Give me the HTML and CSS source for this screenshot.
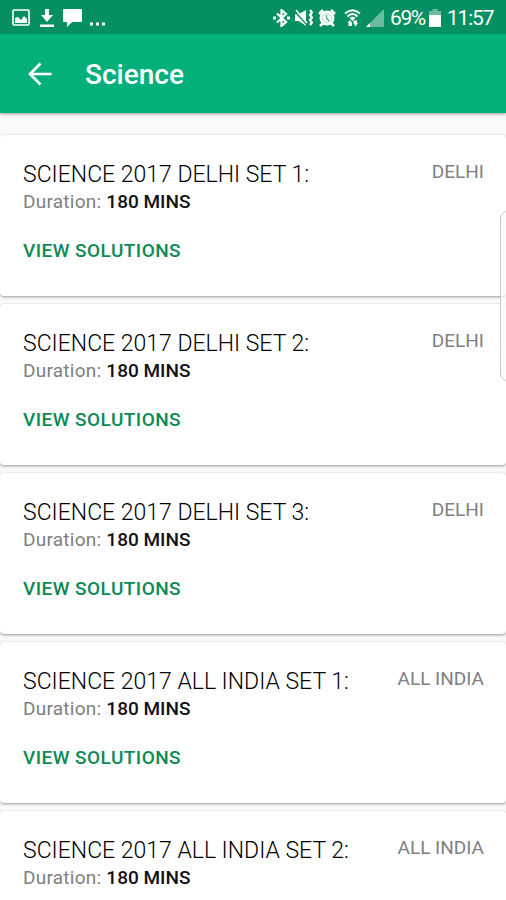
FILE: index.html
```html
<!DOCTYPE html>
<html lang="en">
<head>
    <meta charset="UTF-8">
    <title>Science</title>
    <link rel="stylesheet" href="styles.css">
</head>
<body>
    <header class="header">
        <div class="status-bar">
            <div class="status-left">
                <svg class="icon-picture" width="18" height="17" viewBox="0 0 18 17">
                    <rect x="1" y="1" width="16" height="15" rx="1" fill="none" stroke="#fff" stroke-width="1.6"/>
                    <path d="M3 14V9l3-1 3 3 3-4 3 3v4z" fill="#fff"/>
                </svg>
                <svg class="icon-download" width="14" height="18" viewBox="0 0 14 18">
                    <path d="M5 0h4v6h4l-6 7-6-7h4zM0 15.5h14V18H0z" fill="#fff"/>
                </svg>
                <svg class="icon-chat" width="19" height="18" viewBox="0 0 19 18">
                    <path d="M1 0h17q1 0 1 1v11q0 1-1 1h-9l-5 5v-5H1q-1 0-1-1V1q0-1 1-1z" fill="#fff"/>
                </svg>
                <svg class="icon-more" width="16" height="4" viewBox="0 0 16 4">
                    <path d="M0 .5h3v3H0zM6 .5h3v3H6zM12 .5h3v3h-3z" fill="#fff"/>
                </svg>
            </div>
            <div class="status-right">
                <svg class="icon-bluetooth" width="17" height="18" viewBox="0 0 17 18">
                    <path d="M4 4.5l9 8.5-4.5 4V1L13 5l-9 8.5" fill="none" stroke="#fff" stroke-width="2.2"/>
                    <path d="M0 7.500h3v3H0zM14 7.500h3v3h-3z" fill="#fff"/>
                </svg>
                <svg class="icon-mute" width="18" height="18" viewBox="0 0 18 18">
                    <path d="M0 5h4l7-4v16l-7-5H0z" fill="#fff"/>
                    <path d="M0 2.500L12 16" stroke="#058f62" stroke-width="1.5"/>
                    <path d="M1 1l11 13" stroke="#fff" stroke-width="1.5"/>
                    <path d="M15 1l2 2.500-2 2.500 2 2.500-2 2.500 2 2.500-2 2.500" fill="none" stroke="#fff" stroke-width="2.2"/>
                </svg>
                <svg class="icon-alarm" width="18" height="18" viewBox="0 0 18 18">
                    <circle cx="9" cy="9" r="7.500" fill="#fff"/>
                    <path d="M1 5l4-4M13 1l4 4M2 17l3-3M16 17l-3-3" stroke="#fff" stroke-width="2.500"/>
                    <circle cx="9" cy="9" r="4.500" fill="none" stroke="#b5ddcf" stroke-width="1"/>
                    <path d="M8.500 6v3l2.500 3" fill="none" stroke="#45ad8b" stroke-width="1.300"/>
                </svg>
                <svg class="icon-wifi" width="17" height="18" viewBox="0 0 17 18">
                    <path d="M1 4.500Q8.500-2 16 4.500M3.500 7.500Q8.500 2.500 13.500 7.500" fill="none" stroke="#fff" stroke-width="2"/>
                    <path d="M5.500 9q3-2.500 6 0l-3 3z" fill="#fff"/>
                    <path d="M3.500 14l2.500-3 2 3v3H4.500v-3zM9.500 11.500H13V14h1l-2.500 3.500L9.500 14z" fill="#fff"/>
                </svg>
                <svg class="icon-signal" width="18" height="18" viewBox="0 0 18 18">
                    <path d="M18 0v18H0z" fill="#6bbc9f"/>
                    <path d="M4 14v4H0z" fill="#fff"/>
                </svg>
                <span class="battery-text">69%</span>
                <svg class="icon-battery" width="12" height="18" viewBox="0 0 12 18">
                    <path d="M3.500 0h5v2H12v5H0V2h3.500z" fill="#6bbc9f"/>
                    <path d="M0 6h12v12H0z" fill="#fff"/>
                </svg>
                <span class="clock">11:57</span>
            </div>
        </div>
        <div class="toolbar">
            <svg class="back" width="24" height="24" viewBox="0 0 24 24">
                <path d="M12.500 1.500L2 12l10.500 10.500M2 12h21.500" fill="none" stroke="#fff" stroke-width="2.700"/>
            </svg>
            <h1 class="title">Science</h1>
        </div>
    </header>

    <main class="list">
        <div class="card">
            <div class="card-top">
                <h2 class="card-title">SCIENCE 2017 DELHI SET 1:</h2>
                <span class="region">DELHI</span>
            </div>
            <p class="duration">Duration: <b>180 MINS</b></p>
            <a class="solutions">VIEW SOLUTIONS</a>
        </div>
        <div class="card">
            <div class="card-top">
                <h2 class="card-title">SCIENCE 2017 DELHI SET 2:</h2>
                <span class="region">DELHI</span>
            </div>
            <p class="duration">Duration: <b>180 MINS</b></p>
            <a class="solutions">VIEW SOLUTIONS</a>
        </div>
        <div class="card">
            <div class="card-top">
                <h2 class="card-title">SCIENCE 2017 DELHI SET 3:</h2>
                <span class="region">DELHI</span>
            </div>
            <p class="duration">Duration: <b>180 MINS</b></p>
            <a class="solutions">VIEW SOLUTIONS</a>
        </div>
        <div class="card">
            <div class="card-top">
                <h2 class="card-title">SCIENCE 2017 ALL INDIA SET 1:</h2>
                <span class="region">ALL INDIA</span>
            </div>
            <p class="duration">Duration: <b>180 MINS</b></p>
            <a class="solutions">VIEW SOLUTIONS</a>
        </div>
        <div class="card card-last">
            <div class="card-top">
                <h2 class="card-title">SCIENCE 2017 ALL INDIA SET 2:</h2>
                <span class="region">ALL INDIA</span>
            </div>
            <p class="duration">Duration: <b>180 MINS</b></p>
        </div>
    </main>

    <div class="edge-handle"></div>
</body>
</html>
```

FILE: styles.css
```css
* {
    box-sizing: border-box;
}

body {
    margin: 0;
    height: 900px;
    overflow: hidden;
    position: relative;
    display: flex;
    flex-direction: column;
    background-color: #fafafa;
    font-family: Roboto, "Liberation Sans", sans-serif;
}

h1, h2, p {
    margin: 0;
}

svg {
    display: block;
    flex-shrink: 0;
}

.header {
    flex-shrink: 0;
    background-color: #03b07b;
    box-shadow: 0 1px 3px rgba(0, 0, 0, 0.4);
}

.status-bar {
    height: 34px;
    padding: 1px 13px 0 12px;
    display: flex;
    justify-content: space-between;
    align-items: center;
    background-color: #058f62;
    color: white;
}

.status-left,
.status-right {
    display: flex;
    align-items: center;
}

.icon-download {
    margin-left: 10px;
}

.icon-chat {
    margin-left: 9px;
}

.icon-more {
    margin: 12px 0 0 8px;
}

.icon-mute {
    margin-left: 5px;
}

.icon-alarm {
    margin-left: 5px;
}

.icon-wifi {
    margin-left: 8px;
}

.icon-signal {
    margin-left: 5px;
}

.battery-text,
.clock {
    font-size: 21px;
    line-height: 24px;
    white-space: nowrap;
}

.battery-text {
    width: 34px;
    margin: 0 5px 0 6px;
    letter-spacing: -1.4px;
}

.clock {
    width: 46px;
    margin-left: 6px;
    letter-spacing: -1.2px;
}

.toolbar {
    height: 79px;
    padding-left: 28px;
    display: flex;
    align-items: center;
}

.title {
    margin: 3px 0 0 33px;
    font-size: 28px;
    font-weight: 500;
    line-height: 32px;
    color: white;
}

.list {
    flex: 1;
    min-height: 0;
    padding-top: 22px;
    display: flex;
    flex-direction: column;
    gap: 8px;
}

.card {
    flex-shrink: 0;
    height: 161px;
    padding: 24px 22px 0 23px;
    border-radius: 4px;
    background-color: white;
    box-shadow: 0 1px 3px rgba(0, 0, 0, 0.4);
}

/* cut off by the bottom of the screen */
.card-last {
    flex: 1;
    height: auto;
    border-radius: 4px 4px 0 0;
}

.card-top {
    display: flex;
    justify-content: space-between;
}

.card-title {
    padding-top: 1px;
    font-size: 23px;
    font-weight: 300;
    line-height: 29px;
    color: #000;
}

.region {
    font-size: 19px;
    line-height: 26px;
    color: #808080;
}

.duration {
    font-size: 19px;
    line-height: 26px;
    letter-spacing: 0.25px;
    color: #808080;
}

.duration b {
    font-weight: 500;
    letter-spacing: 0;
    color: #111;
}

.solutions {
    display: block;
    margin-top: 23px;
    font-size: 19px;
    font-weight: 500;
    line-height: 26px;
    letter-spacing: 0.45px;
    color: #0b8a54;
}

/* side panel handle, runs past the right edge of the screen */
.edge-handle {
    position: absolute;
    top: 211px;
    right: -12px;
    width: 18px;
    height: 170px;
    border: 1px solid #ccc;
    border-radius: 7px;
    background-color: rgba(250, 250, 250, 0.7);
}
```
